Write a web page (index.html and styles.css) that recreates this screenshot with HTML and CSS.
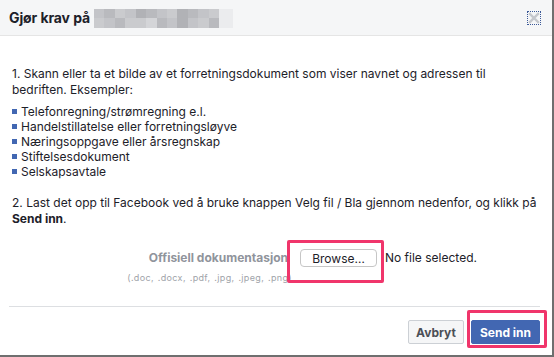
FILE: index.html
```html
<!DOCTYPE html>
<html lang="no">
<head>
<meta charset="utf-8">
<title>Gjør krav på</title>
<link rel="stylesheet" href="styles.css">
</head>
<body>
<div class="dialog">
  <div class="header">
    <span class="title">Gjør krav på</span>
    <span class="blur">
      <span class="t a"></span><span class="t b"></span><span class="t c"></span><span class="t a"></span><span class="t d"></span><span class="t b"></span><span class="t a"></span><span class="t c"></span><span class="t d"></span><span class="t b"></span><span class="t a"></span><span class="t c"></span>
      <span class="t c"></span><span class="t a"></span><span class="t b"></span><span class="t c"></span><span class="t c"></span><span class="t e"></span><span class="t b"></span><span class="t a"></span><span class="t d"></span><span class="t a"></span><span class="t c"></span><span class="t b"></span>
    </span>
    <span class="blur-tail"></span>
    <span class="close">
      <svg width="12" height="12" viewBox="0 0 12 12"><path d="M2 2 L10 10 M10 2 L2 10" stroke="#c4c7cc" stroke-width="2.4" stroke-linecap="square"/></svg>
    </span>
  </div>
  <div class="body">
    <p class="step1">1. Skann eller ta et bilde av et forretningsdokument som viser navnet og adressen til bedriften. Eksempler:</p>
    <ul class="examples">
      <li>Telefonregning/strømregning e.l.</li>
      <li>Handelstillatelse eller forretningsløyve</li>
      <li>Næringsoppgave eller årsregnskap</li>
      <li>Stiftelsesdokument</li>
      <li>Selskapsavtale</li>
    </ul>
    <p class="step2">2. Last det opp til Facebook ved å bruke knappen Velg fil / Bla gjennom nedenfor, og klikk på <b>Send inn</b>.</p>
    <div class="upload">
      <div class="label-col">
        <div class="label">Offisiell dokumentasjon</div>
        <div class="formats">(.doc, .docx, .pdf, .jpg, .jpeg, .png)</div>
      </div>
      <div class="file">
        <span class="browse">Browse…</span>
        <span class="nofile">No file selected.</span>
      </div>
    </div>
  </div>
  <div class="footer">
    <span class="btn cancel">Avbryt</span>
    <span class="btn submit">Send inn</span>
  </div>
  <div class="mark mark-browse"></div>
  <div class="mark mark-submit"></div>
</div>
</body>
</html>
```
FILE: styles.css
```css
* { box-sizing: border-box; }
html, body { margin: 0; padding: 0; }
body {
  width: 554px;
  height: 357px;
  background: #6f6f6f;
  font-family: Inter, "Liberation Sans", Arial, sans-serif;
  color: #1d2129;
  overflow: hidden;
}
.dialog {
  position: relative;
  width: 552px;
  height: 355px;
  background: #fff;
  display: flex;
  flex-direction: column;
}
.header {
  height: 36px;
  background: #f5f6f7;
  border-bottom: 1px solid #e5e5e5;
  display: flex;
  align-items: center;
  padding: 0 11px 0 9px;
}
.title {
  font-size: 14px;
  font-weight: 700;
  color: #1d2129;
  letter-spacing: -0.1px;
}
.blur {
  margin-left: 4px;
  width: 125px;
  height: 19px;
  display: grid;
  grid-template-columns: repeat(12, 1fr);
  grid-template-rows: 1fr 1fr;
  margin-top: 1px;
}
.t.a { background: #c3c4c8; }
.t.b { background: #b9babe; }
.t.c { background: #cacbce; }
.t.d { background: #b1b2b6; }
.t.e { background: #d4d5d8; }
.blur-tail {
  width: 14px;
  height: 19px;
  margin-top: 1px;
  background: #ebecee;
}
.close {
  margin-left: auto;
  width: 14px;
  height: 14px;
  border: 1px dotted #3b5998;
  display: flex;
  align-items: center;
  justify-content: center;
}
.close svg { display: block; }
.body {
  padding: 30px 12px 0 12px;
  font-size: 12px;
}
.step1 {
  margin: 0;
  line-height: 16px;
}
.examples {
  list-style: none;
  margin: 6px 0 0 0;
  padding: 0;
}
.examples li {
  line-height: 15px;
  display: flex;
  align-items: center;
}
.examples li::before {
  content: "";
  width: 5px;
  height: 5px;
  background: #4267b2;
  margin-right: 4px;
  flex: none;
}
.step2 {
  margin: 16px 0 0 0;
  line-height: 16px;
}
.upload {
  display: flex;
  margin-top: 22px;
}
.label-col {
  width: 276px;
  text-align: right;
}
.label {
  font-weight: 700;
  color: #90949c;
  line-height: 18px;
}
.formats {
  font-size: 9px;
  color: #a0a3a9;
  letter-spacing: 0.35px;
  word-spacing: 1px;
  margin-top: 5px;
  margin-right: -4px;
}
.file {
  margin-left: 12px;
  display: flex;
  align-items: flex-start;
}
.browse {
  width: 77px;
  height: 18px;
  border: 1px solid #c6c6c6;
  border-radius: 4px;
  background: #fff;
  font-size: 12px;
  color: #1d2129;
  display: flex;
  align-items: center;
  justify-content: center;
}
.nofile {
  margin-left: 8px;
  line-height: 18px;
}
.footer {
  margin: auto 12px 0 9px;
  border-top: 1px solid #dddfe2;
  padding: 13px 0 11px 0;
  display: flex;
  justify-content: flex-end;
  gap: 7px;
}
.btn {
  height: 24px;
  padding: 0;
  border-radius: 2px;
  font-size: 12px;
  font-weight: 700;
  white-space: nowrap;
  display: flex;
  align-items: center;
  border: 1px solid;
}
.cancel {
  width: 56px;
  justify-content: center;
  background: #f5f6f7;
  border-color: #ccd0d5;
  color: #4b4f56;
}
.submit {
  width: 69px;
  justify-content: center;
  background: #4267b2;
  border-color: #4267b2;
  color: #fff;
}
.mark {
  position: absolute;
  border: 3px solid #f0356b;
  border-radius: 2px;
}
.mark-browse {
  left: 287px;
  top: 240px;
  width: 97px;
  height: 43px;
}
.mark-submit {
  left: 467px;
  top: 310px;
  width: 80px;
  height: 38px;
}
```
